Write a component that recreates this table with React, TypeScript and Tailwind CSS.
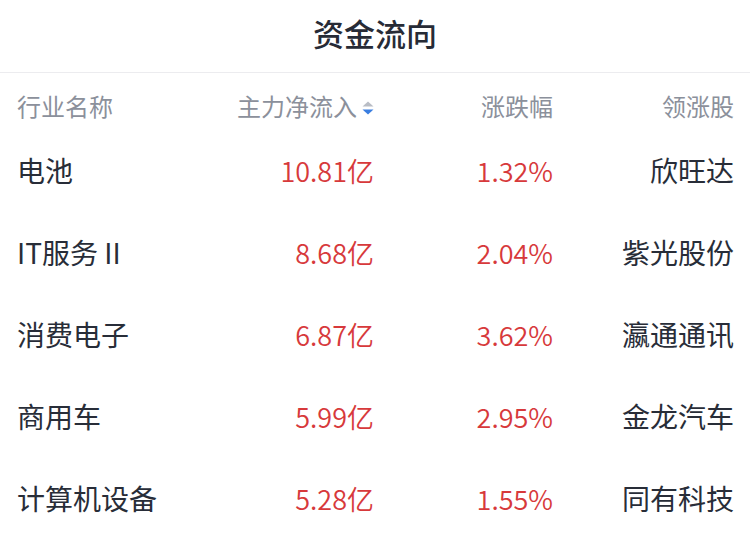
import React from "react";

const rows = [
  { name: "电池", flow: "10.81亿", pct: "1.32%", lead: "欣旺达" },
  { name: "IT服务 II", flow: "8.68亿", pct: "2.04%", lead: "紫光股份" },
  { name: "消费电子", flow: "6.87亿", pct: "3.62%", lead: "瀛通通讯" },
  { name: "商用车", flow: "5.99亿", pct: "2.95%", lead: "金龙汽车" },
  { name: "计算机设备", flow: "5.28亿", pct: "1.55%", lead: "同有科技" },
];

export default function App() {
  return (
    <div
      className="w-[750px] h-[548px] bg-white overflow-hidden"
      style={{ fontFamily: '"Noto Sans CJK SC", sans-serif' }}
    >
      <div className="h-[73px] pb-[8px] flex items-center justify-center border-b border-[#ececef]">
        <span className="text-[31px] font-medium text-[#272b36] leading-none">资金流向</span>
      </div>
      <div className="pl-[17px] pr-[16px]">
        <div className="grid grid-cols-[200px_157px_179px_181px] h-[57px] pt-[9px] items-center text-[24px] text-[#8b909b] leading-none">
          <div>行业名称</div>
          <div className="flex items-center justify-end">
            <span>主力净流入</span>
            <svg width="12" height="14" viewBox="0 0 12 14" className="ml-[5px] mt-[3px]">
              <path d="M6 0.5 L11.5 5.5 L0.5 5.5 Z" fill="#b9bdc5" />
              <path d="M0.5 8.5 L11.5 8.5 L6 13.5 Z" fill="#3a7ee0" />
            </svg>
          </div>
          <div className="text-right">涨跌幅</div>
          <div className="text-right">领涨股</div>
        </div>
        {rows.map((r) => (
          <div
            key={r.name}
            className="grid grid-cols-[200px_157px_179px_181px] h-[82px] pb-[2px] items-center text-[28px] leading-none"
          >
            <div className="text-[#282d38]">{r.name}</div>
            <div className="text-right text-[#d7393b] text-[27px] font-[350]">{r.flow}</div>
            <div className="text-right text-[#d7393b] text-[27px] font-[350]">{r.pct}</div>
            <div className="text-right text-[#282d38]">{r.lead}</div>
          </div>
        ))}
      </div>
    </div>
  );
}
